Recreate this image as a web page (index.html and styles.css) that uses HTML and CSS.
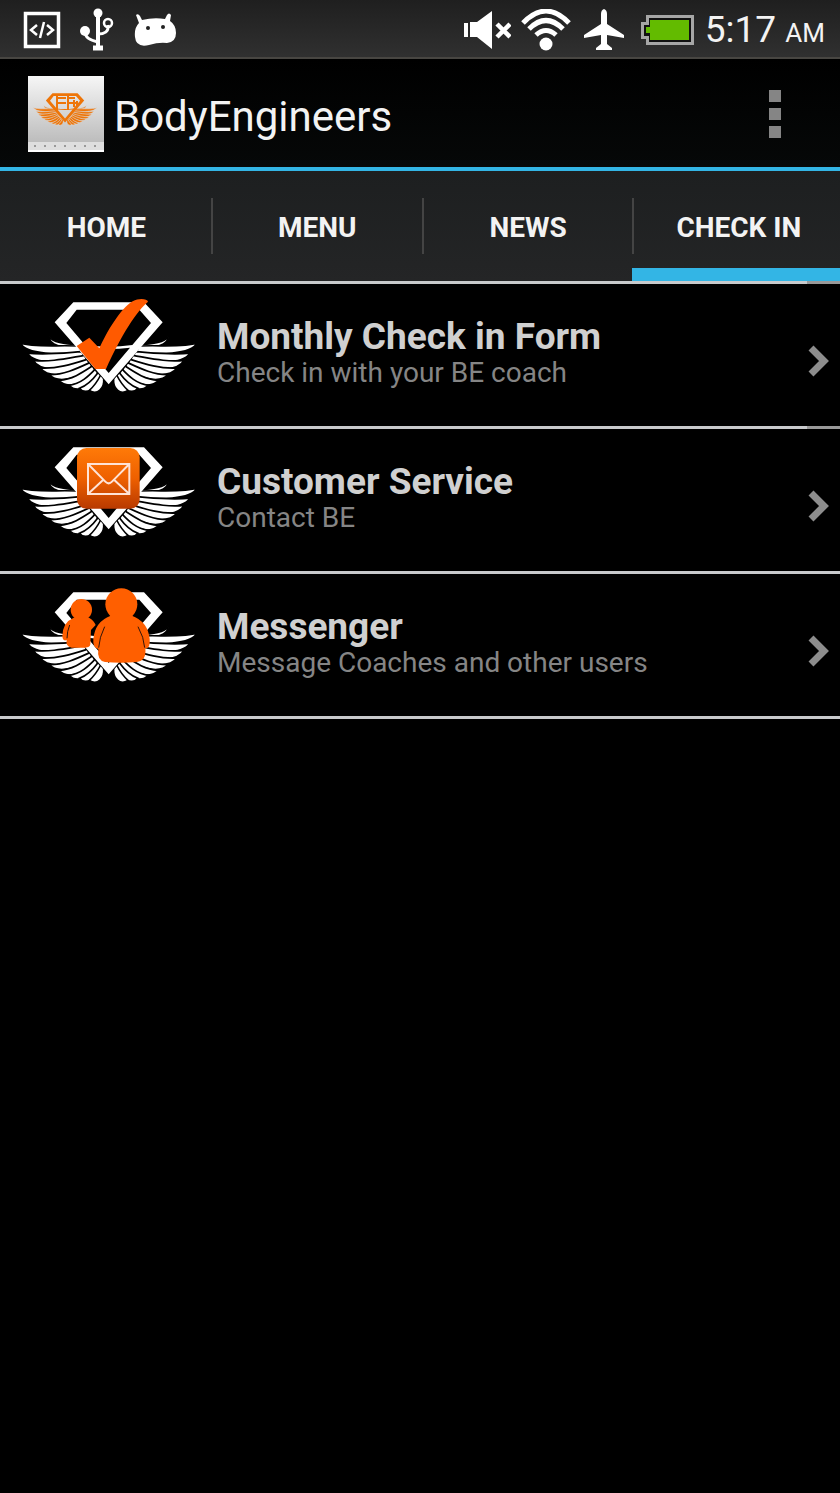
FILE: index.html
```html
<!DOCTYPE html>
<html lang="en">
<head>
<meta charset="utf-8">
<meta name="viewport" content="width=device-width, initial-scale=1">
<title>BodyEngineers</title>
<link rel="stylesheet" href="styles.css">
</head>
<body>
<svg class="defs" aria-hidden="true">
  <defs>
    <linearGradient id="metal" x1="0" y1="0" x2="0" y2="1">
      <stop offset="0" stop-color="#f6f6f6"/><stop offset="1" stop-color="#b4b4b4"/>
    </linearGradient>
    <linearGradient id="tile" x1="0" y1="0" x2="0" y2="1">
      <stop offset="0" stop-color="#ff7a08"/><stop offset="0.5" stop-color="#ee6000"/><stop offset="1" stop-color="#b83a00"/>
    </linearGradient>
    <g id="wing" class="wing">
      <path d="M117 154C128 172 160 177 210 180V190C155 188 117 182 117 154Z"/>
      <path d="M30 174C70 188 140 180 205 183L213 202C150 208 50 211 30 174Z"/>
      <path d="M52 204C100 211 150 205 215 200L222 213C170 233 74 242 52 204Z"/>
      <path d="M70 226C120 232 170 220 223 211L231 225C190 250 94 268 70 226Z"/>
      <path d="M91 249C140 252 185 238 231 223L238 235C200 264 120 286 91 249Z"/>
      <path d="M118 269C160 270 200 251 239 233L246 245C218 277 144 299 118 269Z"/>
      <path d="M148 286C185 284 215 264 247 243L254 254C240 292 170 316 148 286Z"/>
      <path d="M178 301C212 296 235 274 255 253L263 264C252 306 198 326 178 301Z"/>
      <path d="M208 310C235 300 250 282 264 263L272 271C268 310 226 332 208 310Z"/>
      <path d="M238 316C256 300 264 286 272 270L281 281C284 310 262 332 238 316Z"/>
    </g>
    <symbol id="emblem" viewBox="0 0 600 360">
      <use href="#wing"/>
      <use href="#wing" transform="translate(592 0) scale(-1 1)"/>
      <path fill-rule="evenodd" d="M190 52H402L458 112L296 298L134 112ZM200 74L169 114L225 180Q296 190 367 180L423 114L388 74ZM232 188L296 264L360 188Q296 196 232 188Z"/>
    </symbol>
  </defs>
</svg>

<div class="screen">
  <header class="status">
    <div class="status-group left">
      <svg width="38" height="38" viewBox="0 0 38 38" fill="none" stroke="#fff"><path stroke-width="3.500" d="M2.500 2.500h33v33h-33z"/><path stroke-width="2.500" d="M14 14l-6 5 6 5M24 14l6 5-6 5M21 11l-4 16"/></svg>
      <svg width="34" height="43" viewBox="0 0 34 43" fill="none" stroke="#fff"><path stroke-width="4" d="M18 5v34"/><path stroke-width="3" d="M5 23C5 30 10 32 18 34M28 17C29 24 24 26 18 26"/><circle cx="18" cy="5" r="4.500" fill="#fff" stroke="none"/><circle cx="5" cy="23" r="5" fill="#fff" stroke="none"/><circle cx="28" cy="15" r="4" stroke-width="2.500"/><path stroke-width="5" d="M13 40h10"/></svg>
      <svg width="44" height="34" viewBox="0 0 44 34"><path fill="#fff" d="M3 2q2-2 4 1l2 4q12-3 23-1l2-4q2-3 4 0l-1 6q6 4 6 12 0 9-9 10-8-1-18 2-13 3-14-8Q1 15 6 10Z"/><circle cx="15" cy="15" r="2" fill="#222"/><circle cx="30" cy="14" r="2" fill="#222"/></svg>
    </div>
    <div class="status-group right">
      <svg width="48" height="40" viewBox="0 0 48 40"><path fill="#fff" d="M1 13h4v14H1zM7 12h7L29 1v38L14 27H7z"/><path d="M34 14l13 13M47 14L34 27" stroke="#fff" stroke-width="4.500"/></svg>
      <svg width="50" height="42" viewBox="0 0 50 42" fill="none" stroke="#fff" stroke-width="5"><path d="M2 14Q25-10 48 14M8 20Q25 3 42 20M15 26Q25 17 35 26"/><circle cx="25" cy="35" r="6.500" fill="#fff" stroke="none"/></svg>
      <svg class="plane" width="42" height="42" viewBox="0 0 42 42"><path fill="#fff" d="M21 0Q24 1 24 5V15L41 26V29L24 26V35L29 39V41H13V39L18 35V26L1 29V26L18 15V5Q18 1 21 0Z"/></svg>
      <svg class="battery" width="54" height="30" viewBox="0 0 54 30"><path fill="#111" stroke="#a6a6a6" stroke-width="3" d="M6.500 1.500h45v27h-45v-6h-5v-14h5z"/><path fill="#63bb00" d="M9 5h39v20H9v-7H5v-6h4z"/></svg>
      <time class="clock">5:17 <span>AM</span></time>
    </div>
  </header>

  <div class="appbar">
    <svg class="app-icon" viewBox="0 0 76 76" role="img" aria-label="BodyEngineers logo">
      <path fill="url(#metal)" d="M0 0h76v76H0z"/>
      <path fill="#dedede" d="M0 66h76v10H0z"/><path fill="#fff" d="M0 74h76v2H0z"/>
      <path d="M6 70h64" stroke="#999" stroke-width="2" stroke-dasharray="2 8"/>
      <g fill="#ee7508"><svg x="2" y="11" width="71" height="43" viewBox="0 0 600 360"><use href="#emblem" width="600" height="360"/></svg></g>
      <path d="M29 20v14M29 27h9M29 22h9M40 20v14M40 22h7M40 27h9M46 24v7M49 25v5" stroke="#ee7508" stroke-width="2" fill="none"/>
    </svg>
    <h1>BodyEngineers</h1>
    <button class="overflow" aria-label="More options"><i></i><i></i><i></i></button>
  </div>

  <nav class="tabs">
    <a href="#home">HOME</a>
    <a href="#menu">MENU</a>
    <a href="#news">NEWS</a>
    <a href="#checkin" class="active" aria-current="page">CHECK IN</a>
  </nav>

  <main class="list">
    <a class="row" href="#form">
      <svg class="emblem" viewBox="0 0 600 360" fill="#fff"><use href="#emblem"/><path fill="#ff5a00" d="M200 183L238 158L268 190C290 142 330 72 368 49C388 38 412 42 414 50C380 78 334 150 288 252H256Z"/></svg>
      <span class="text"><strong>Monthly Check in Form</strong><span>Check in with your BE coach</span></span>
      <svg class="chevron" viewBox="0 0 22 32"><path d="M3 3l13 13L3 29"/></svg>
    </a>
    <a class="row" href="#service">
      <svg class="emblem" viewBox="0 0 600 360" fill="#fff"><use href="#emblem"/><rect x="201" y="54" width="188" height="182" rx="28" fill="url(#tile)"/><path fill="none" stroke="#ffe3d6" stroke-width="6" d="M234 102H358V192H234ZM234 102L286 155Q296 165 306 155L358 102M234 192L280 149M358 192L312 149"/></svg>
      <span class="text"><strong>Customer Service</strong><span>Contact BE</span></span>
      <svg class="chevron" viewBox="0 0 22 32"><path d="M3 3l13 13L3 29"/></svg>
    </a>
    <a class="row" href="#messenger">
      <svg class="emblem" viewBox="0 0 600 360" fill="#fff"><use href="#emblem"/><g fill="#ff5f00"><circle cx="214" cy="104" r="32"/><path d="M191 128H237Q252 136 257 150L243 165L241 208Q240 218 225 218H185Q166 214 170 195Q158 200 157 183Q158 142 191 128Z"/><circle cx="334" cy="88" r="48"/><path d="M302 122H366Q414 140 419 192Q421 222 406 220Q410 258 380 261Q334 266 285 261Q260 256 265 222Q248 220 250 193Q254 140 302 122Z"/></g><path d="M284 155Q268 187 266 218M384 155Q402 187 404 218M179 150Q171 170 171 190" fill="none" stroke="#33150a" stroke-width="3"/></svg>
      <span class="text"><strong>Messenger</strong><span>Message Coaches and other users</span></span>
      <svg class="chevron" viewBox="0 0 22 32"><path d="M3 3l13 13L3 29"/></svg>
    </a>
  </main>
</div>
</body>
</html>
```
FILE: styles.css
```css
* { box-sizing: border-box; }
body { margin: 0; background: #000; font-family: Roboto, "Liberation Sans", sans-serif; color: #f3f3f3; }
a { color: inherit; text-decoration: none; }
.defs { position: absolute; width: 0; height: 0; }
.wing { stroke: var(--gap, #000); stroke-width: 5; }
.screen { min-height: 100vh; overflow: hidden; }

.status {
  display: flex; justify-content: space-between; align-items: center;
  height: 59px; padding: 2px 15px 0 23px;
  background: linear-gradient(#1f1f1f, #303030);
  border-bottom: 2px solid #484642;
}
.status-group { display: flex; align-items: center; }
.left { gap: 19px; }
.right { gap: 10px; }
.plane { margin-left: 2px; }
.battery { margin-left: 6px; }
.clock { font-size: 37px; line-height: 44px; padding-top: 4px; white-space: nowrap; }
.clock span { font-size: 26px; }

.appbar {
  display: flex; align-items: center; gap: 10px;
  height: 112px; padding: 2px 55px 0 28px;
  background: linear-gradient(#000, #060808);
  border-bottom: 4px solid #33b5e5;
}
.app-icon { width: 76px; height: 76px; --gap: #dadada; }
.appbar h1 { flex: 1; margin: 0; padding-top: 6px; font-size: 42px; font-weight: 400; line-height: 52px; }
.overflow {
  display: flex; flex-direction: column; align-items: center; gap: 6px;
  padding: 4px; border: 0; background: none;
}
.overflow i { width: 12px; height: 12px; background: #858585; }

.tabs { display: flex; height: 110px; background: linear-gradient(#1d1f20, #242526); overflow: hidden; }
.tabs a {
  position: relative; flex: 0 0 25.1%;
  display: flex; align-items: center; justify-content: center;
  font-size: 28px; font-weight: 700; line-height: 34px;
  padding: 4px 0 0 2px;
}
.tabs a + a::before {
  content: ""; position: absolute; left: 0; top: 27px; width: 2px; height: 56px; background: #444;
}
.tabs .active { border-bottom: 13px solid #33b5e5; padding-top: 17px; }

.list { border-top: 3px solid; border-image: linear-gradient(90deg, #c8cacc 96%, #999 96%) 1; }
.row {
  display: flex; align-items: flex-start;
  height: 145px; padding: 1px 10px 0;
  border-bottom: 3px solid #c8cacc;
}
.row:first-child { border-image: linear-gradient(90deg, #c8cacc 96%, #999 96%) 1; }
.emblem { width: 200px; height: 120px; flex: none; }
.text { flex: 1; display: flex; flex-direction: column; padding: 32px 0 0 7px; }
.text strong { font-size: 37px; line-height: 40px; color: #d0d0d0; }
.text span { font-size: 28px; line-height: 32px; color: #858585; }
.chevron { width: 22px; height: 32px; margin-top: 60px; fill: none; stroke: #8d8d8d; stroke-width: 7; }
```
